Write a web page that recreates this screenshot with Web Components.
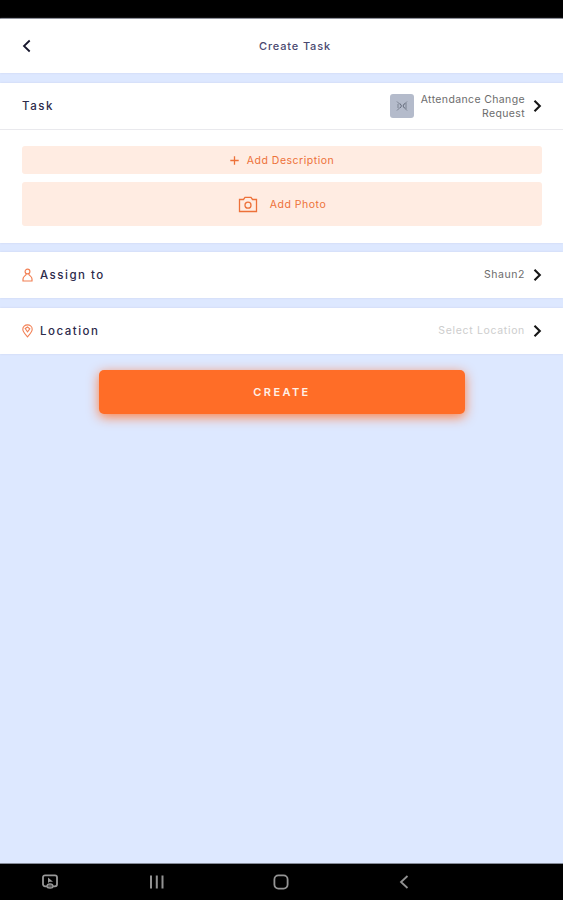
<!DOCTYPE html>
<html lang="en">
<head>
<meta charset="utf-8">
<title>Create Task</title>
<style>
html,body{margin:0;height:100%;background:#dde8ff}
body{font-family:Inter,"Open Sans",sans-serif;font-size:11px;line-height:14px;color:#25254f}
</style>
</head>
<body>
<create-task-screen></create-task-screen>
<script>
function define(name, html) {
  const tpl = document.createElement('template');
  tpl.innerHTML = html;
  customElements.define(name, class extends HTMLElement {
    constructor() {
      super();
      this.attachShadow({ mode: 'open' }).append(tpl.content.cloneNode(true));
    }
  });
}

define('status-bar', `<style>:host{display:block;height:19px;box-sizing:border-box;background:#000;border-bottom:1px solid #747474}</style>`);

define('title-bar', `<style>
:host{display:grid;grid-template-columns:1fr auto 1fr;align-items:center;height:54px;padding:0 22px;background:#fff;box-sizing:border-box;box-shadow:0 0 2px #cbd4ee}
svg{display:block}
.t{font-weight:500;font-size:11px;letter-spacing:.85px;color:#4a4970;padding-left:27px}
</style>
<svg width="10" height="14" viewBox="0 0 10 14" fill="none" stroke="#17172c" stroke-width="1.8"><path d="M7.700 1.500 2 7l5.700 5.500"/></svg>
<span class="t"><slot></slot></span><span></span>`);

define('chevron-icon', `<style>:host{display:block;width:9px;height:14px}svg{display:block}</style>
<svg width="9" height="14" viewBox="0 0 9 14" fill="none" stroke="#161616" stroke-width="2.1"><path d="M1.500 1.800 6.800 7l-5.300 5.200"/></svg>`);

define('form-row', `<style>
:host{display:flex;align-items:center;height:46px;padding:0 21px 0 22px;box-sizing:border-box;background:#fff}
.label{display:flex;align-items:center;flex:1;font-weight:500;font-size:11.5px;letter-spacing:1.5px;color:#2c2b4b}
.value{display:flex;align-items:center;text-align:right;color:var(--value,#6c6c6c);font-size:10.5px;letter-spacing:var(--track,.3px)}
chevron-icon{margin-left:8px}
::slotted(svg){display:block;margin-right:7px}
</style><span class="label"><slot name="icon"></slot><slot></slot></span><span class="value"><slot name="value"></slot></span><chevron-icon></chevron-icon>`);

define('request-badge', `<style>:host{display:block;width:24px;height:24px;border-radius:3px;background:#b4bbcb;margin-right:7px}svg{display:block}</style>
<svg width="24" height="24" viewBox="0 0 24 24" fill="none" stroke="#7b8291" stroke-width="1"><path d="M7 7.500l3 3M7 16.500l3-3M17 7.500l-3 3M17 16.500l-3-3M8 10v4M16 9v6"/><path d="M10 9.500l1.500 2.500-1.500 2M14.500 9.500l-1.500 2.500 1.500 2" stroke="#666d7e"/></svg>`);

define('soft-button', `<style>
:host{display:flex;align-items:center;justify-content:center;box-sizing:border-box;background:#ffece2;border-radius:3px;color:#ed7139;font-weight:400;font-size:10.5px}
::slotted(svg){display:block}
</style><slot></slot>`);

define('primary-button', `<style>
:host{display:block}
button{display:block;width:366px;height:44px;margin:0 0 0 99px;padding:0;border:0;border-radius:5px;background:#ff6d27;box-shadow:0 3px 12px #ff7a3cf0;color:#fff0e6;font:600 11px/14px Inter,sans-serif;letter-spacing:2.4px}
</style><button><slot></slot></button>`);

define('system-nav', `<style>
:host{display:grid;grid-template-columns:100px 114px 133px 114px 1fr;height:37px;box-sizing:border-box;border-top:1px solid #858b98;background:#000;align-items:center;justify-items:center}
svg{display:block}
</style>
<svg width="18" height="16" viewBox="0 0 18 16" fill="none" stroke="#999" stroke-width="1.8"><path d="M4 1.300h10a2 2 0 0 1 2 2v7a2 2 0 0 1-2 2H4a2 2 0 0 1-2-2v-7a2 2 0 0 1 2-2z"/><path d="M7 3.500v5.500l1.600-1.300L12 7.800z" fill="#999" stroke="none"/><path d="M6 12.200c0-3 6-3 6 0 0 2.500-6 2.500-6 0z" fill="#555" stroke-width="1.300"/></svg>
<svg width="16" height="14" viewBox="0 0 16 14" stroke="#929292" stroke-width="2"><path d="M2 .5v13M7.800.5v13M13.500.5v13"/></svg>
<svg width="16" height="16" viewBox="0 0 16 16" fill="none" stroke="#959595" stroke-width="1.8"><rect x="1.400" y="1.400" width="13.200" height="13.200" rx="4"/></svg>
<svg width="12" height="14" viewBox="0 0 12 14" fill="none" stroke="#929292" stroke-width="1.8"><path d="M9.500 1 3 7l6.500 6"/></svg>`);

define('create-task-screen', `<style>
:host{display:flex;flex-direction:column;height:900px;width:563px;background:#dde8ff;overflow:hidden}
.task{margin-top:10px;background:#fff;height:160px;box-shadow:0 0 2px #cbd4ee}
.task form-row{height:47px;border-bottom:1px solid #e9e9ed}
.actions{display:flex;flex-direction:column;gap:8px;padding:16px 21px 0 22px}
.desc{height:28px}.photo{height:44px}
.desc svg{margin-right:8px}.photo svg{margin-right:12px}
.assign{margin-top:9px;--track:.55px}.location{margin-top:10px;--value:#cdcdcd;--track:.67px}
.assign,.location{box-shadow:0 0 2px #cbd4ee}
primary-button{margin-top:16px}
system-nav{margin-top:auto}
.name{line-height:14px;letter-spacing:.37px;padding-top:1px}
.d,.p{letter-spacing:.5px;padding-top:1px}
</style>
<status-bar></status-bar>
<title-bar>Create Task</title-bar>
<section class="task">
<form-row>Task<request-badge slot="value"></request-badge><span slot="value" class="name">Attendance Change<br>Request</span></form-row>
<div class="actions">
<soft-button class="desc"><svg width="9" height="9" viewBox="0 0 9 9" stroke="#ed7139" stroke-width="1.3"><path d="M4.500.3v8.400M.3 4.500h8.400"/></svg><span class="d">Add Description</span></soft-button>
<soft-button class="photo"><svg width="20" height="17" viewBox="0 0 20 17" fill="none" stroke="#ed7139" stroke-width="1.3"><path d="M1.500 3.500h4L7 1.400h6l1.500 2.100h4v12h-17z"/><circle cx="10" cy="9.200" r="3"/></svg><span class="p">Add Photo</span></soft-button>
</div>
</section>
<form-row class="assign"><svg slot="icon" width="11" height="14" viewBox="0 0 11 14" fill="none" stroke="#f28055" stroke-width="1.2"><circle cx="5.500" cy="3.500" r="2.400"/><path d="M4.200 6C4 8 1 8 1 11v2h9v-2c0-3-3-3-3.200-5"/></svg>Assign to<span slot="value">Shaun2</span></form-row>
<form-row class="location"><svg slot="icon" width="11" height="14" viewBox="0 0 11 14" fill="none" stroke="#f28055" stroke-width="1.1"><path d="M5.500 12.800C3 10 .8 7.800.8 5.200a4.700 4.300 0 0 1 9.400 0c0 2.600-2.200 4.800-4.700 7.600z"/><path d="M3.200 4.500 5.500 3l2.300 1.800-2.300 3z"/></svg>Location<span slot="value">Select Location</span></form-row>
<primary-button>CREATE</primary-button>
<system-nav></system-nav>`);
</script>
</body>
</html>
